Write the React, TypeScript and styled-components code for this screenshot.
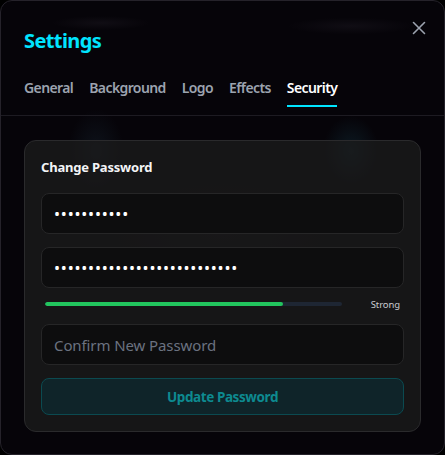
import React from "react";
import styled, { createGlobalStyle } from "styled-components";

const Global = createGlobalStyle`
  html, body { margin: 0; padding: 0; background: #000; }
  body { font-family: "Noto Sans", "Open Sans", sans-serif; -webkit-font-smoothing: antialiased; }
  * { box-sizing: border-box; }
`;

const Dialog = styled.div`
  position: relative;
  width: 445px;
  height: 455px;
  border: 1px solid #25222a;
  border-radius: 12px;
  overflow: hidden;
  background:
    radial-gradient(ellipse 40px 60px at 95px 150px, rgba(40, 70, 90, 0.22), transparent 70%),
    radial-gradient(ellipse 40px 50px at 350px 150px, rgba(30, 90, 110, 0.25), transparent 70%),
    radial-gradient(ellipse 70px 10px at 100px 22px, rgba(90, 80, 100, 0.12), transparent 70%),
    radial-gradient(ellipse 90px 12px at 350px 25px, rgba(90, 80, 100, 0.12), transparent 70%),
    radial-gradient(ellipse 180px 80px at 220px 230px, rgba(60, 60, 70, 0.12), transparent 70%),
    #060409;
  display: flex;
  flex-direction: column;
`;

const Header = styled.div`
  padding: 26px 23px 8px;
  border-bottom: 1px solid #1d1b22;
`;

const Title = styled.h1`
  margin: 0;
  font-size: 20px;
  line-height: 28px;
  font-weight: 700;
  color: #00e5ff;
  letter-spacing: -0.6px;
`;

const CloseButton = styled.button`
  position: absolute;
  top: 19px;
  right: 17px;
  width: 16px;
  height: 16px;
  padding: 0;
  border: 0;
  background: transparent;
  color: #9ca3af;
  display: flex;
  align-items: center;
  justify-content: center;
`;

const Tabs = styled.nav`
  display: flex;
  gap: 16px;
  margin-top: 23px;
`;

const Tab = styled.div<{ $active?: boolean }>`
  font-size: 14px;
  line-height: 20px;
  font-weight: 600;
  padding-bottom: 7px;
  color: ${(p) => (p.$active ? "#ffffff" : "#9ca3af")};
  border-bottom: 2px solid ${(p) => (p.$active ? "#00e5ff" : "transparent")};
  letter-spacing: -0.6px;
`;

const Content = styled.div`
  padding: 24px 23px;
`;

const Card = styled.section`
  border: 1px solid #2a2a2c;
  border-radius: 12px;
  background: rgba(28, 28, 28, 0.75);
  padding: 16px;
  display: flex;
  flex-direction: column;
`;

const CardTitle = styled.h2`
  margin: 0 0 16px;
  font-size: 13px;
  line-height: 20px;
  font-weight: 700;
  color: #f3f4f6;
  letter-spacing: -0.2px;
`;

const Input = styled.input<{ $mt?: number }>`
  height: 41px;
  width: 100%;
  margin-top: ${(p) => p.$mt ?? 0}px;
  border: 1px solid #262627;
  border-radius: 8px;
  background: #0d0d0e;
  padding: 0 12px;
  color: #ffffff;
  font-family: "Noto Sans", sans-serif;
  font-size: 15px;
  letter-spacing: -0.1px;
  outline: none;
  &::placeholder { color: #6b7280; }
  &[type="password"]:not(:placeholder-shown) { font-size: 16px; letter-spacing: 0.8px; }
`;

const StrengthRow = styled.div`
  display: flex;
  align-items: center;
  margin-top: 8px;
  padding: 0 4px;
  height: 16px;
`;

const Track = styled.div`
  flex: 1;
  height: 4px;
  border-radius: 999px;
  background: #1e2633;
  overflow: hidden;
`;

const Fill = styled.div`
  height: 100%;
  border-radius: 999px;
  background: #22c55e;
`;

const StrengthLabel = styled.span`
  width: 58px;
  text-align: right;
  font-size: 9.5px;
  color: #c9cbd0;
  letter-spacing: -0.1px;
`;

const SubmitButton = styled.button`
  margin-top: 13px;
  height: 37px;
  width: 100%;
  border: 1px solid #0b4a50;
  border-radius: 8px;
  background: #0f2429;
  color: #0d8a90;
  font-family: "Noto Sans", sans-serif;
  font-size: 13.5px;
  font-weight: 700;
  letter-spacing: -0.4px;
`;

export default function App() {
  return (
    <>
      <Global />
      <Dialog>
        <CloseButton aria-label="Close">
          <svg width="14" height="14" viewBox="0 0 14 14" fill="none" stroke="currentColor" strokeWidth="1.6" strokeLinecap="round">
            <path d="M1.5 1.5 12.5 12.5M12.5 1.5 1.5 12.5" />
          </svg>
        </CloseButton>
        <Header>
          <Title>Settings</Title>
          <Tabs>
            <Tab>General</Tab>
            <Tab>Background</Tab>
            <Tab>Logo</Tab>
            <Tab>Effects</Tab>
            <Tab $active>Security</Tab>
          </Tabs>
        </Header>
        <Content>
          <Card>
            <CardTitle>Change Password</CardTitle>
            <Input type="password" defaultValue="currentpass" placeholder="Current Password" readOnly />
            <Input type="password" defaultValue="averylongnewpassword1234567" placeholder="New Password" readOnly $mt={13} />
            <StrengthRow>
              <Track>
                <Fill style={{ width: "80%" }} />
              </Track>
              <StrengthLabel>Strong</StrengthLabel>
            </StrengthRow>
            <Input type="password" placeholder="Confirm New Password" $mt={12} />
            <SubmitButton disabled>Update Password</SubmitButton>
          </Card>
        </Content>
      </Dialog>
    </>
  );
}
